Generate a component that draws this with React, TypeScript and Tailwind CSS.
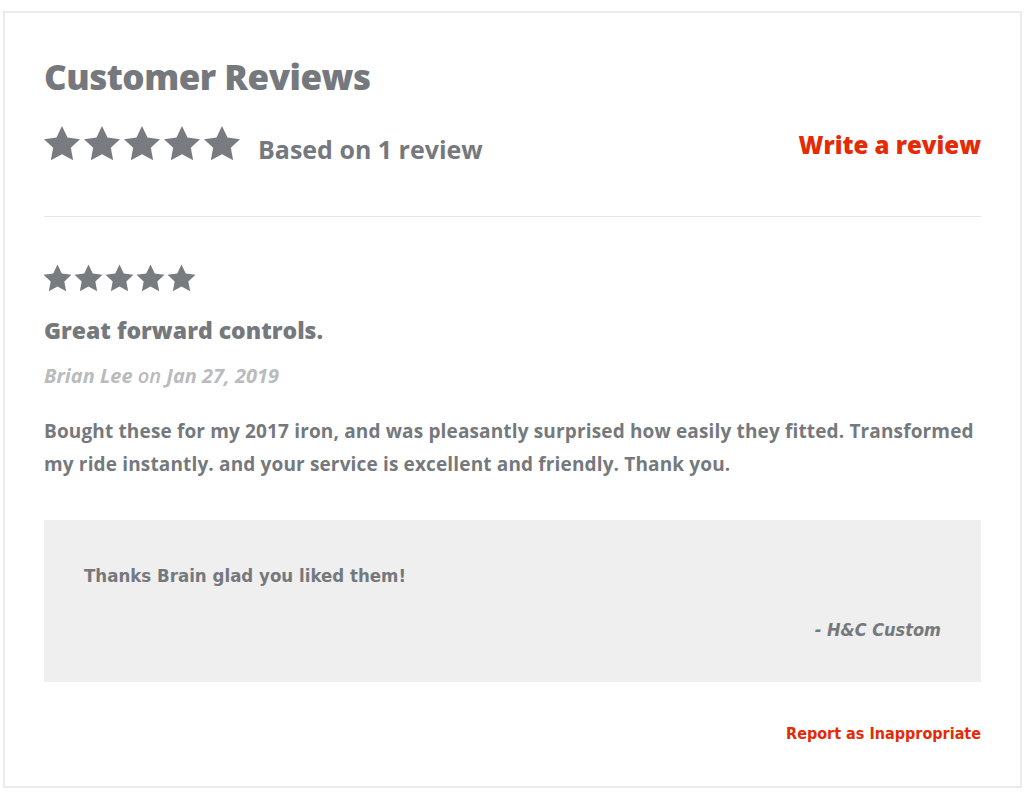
import React from 'react';

const Star: React.FC<{ size: number }> = ({ size }) => (
    <svg width={size} height={size} viewBox="0 0 24 24" fill="#787c80">
        <path d="M12 1.2l3.3 6.9 7.5 1-5.5 5.2 1.4 7.5L12 18.2l-6.7 3.6 1.4-7.5L1.2 9.1l7.5-1z" />
    </svg>
);

const Stars: React.FC<{ size: number }> = ({ size }) => (
    <div className="flex -ml-[2px]">
        {[0, 1, 2, 3, 4].map((i) => (
            <Star key={i} size={size} />
        ))}
    </div>
);

const App: React.FC = () => {
    return (
        <div className="min-h-[797px] bg-white pt-[11px] pl-[3px] pr-[2px]" style={{ fontFamily: '"Open Sans", "DejaVu Sans", sans-serif' }}>
            <div className="h-[777px] border-2 border-[#ebebeb] px-[39px] pt-[42px] text-[#75797d]">
                <h1 className="text-[35px] font-extrabold leading-[44px] tracking-[-0.5px]">Customer Reviews</h1>

                <div className="mt-[20px] flex items-center justify-between pb-[47px] border-b border-[#e6e6e6]">
                    <div className="flex items-center">
                        <Stars size={40} />
                        <span className="ml-[16px] mt-[12px] text-[25px] font-bold">Based on 1 review</span>
                    </div>
                    <a className="text-[24px] font-extrabold text-[#e52a06] mt-[2px]">Write a review</a>
                </div>

                <div className="pt-[46px]">
                    <Stars size={31} />
                    <h3 className="mt-[19px] text-[23px] font-extrabold">Great forward controls.</h3>
                    <div className="mt-[14px] text-[20px] font-bold italic text-[#b9bbbd]">
                        Brian Lee <span className="font-semibold">on</span> Jan 27, 2019
                    </div>
                    <p className="mt-[24px] text-[19px] font-bold leading-[33px] tracking-[0.15px]">
                        Bought these for my 2017 iron, and was pleasantly surprised how easily they fitted. Transformed my ride instantly. and your service is excellent and friendly. Thank you.
                    </p>

                    <div className="mt-[39px] h-[162px] bg-[#efefef] px-[40px] pt-[42px]" style={{ fontFamily: '"DejaVu Sans Condensed", "DejaVu Sans", sans-serif' }}>
                        <p className="text-[18.5px] font-bold">Thanks Brain glad you liked them!</p>
                        <p className="mt-[26px] text-right text-[18px] font-bold italic">- H&amp;C Custom</p>
                    </div>

                    <div className="mt-[40px] text-right" style={{ fontFamily: '"DejaVu Sans Condensed", "DejaVu Sans", sans-serif' }}>
                        <a className="text-[16px] font-bold text-[#e52a06]">Report as Inappropriate</a>
                    </div>
                </div>
            </div>
        </div>
    );
};

export default App;
